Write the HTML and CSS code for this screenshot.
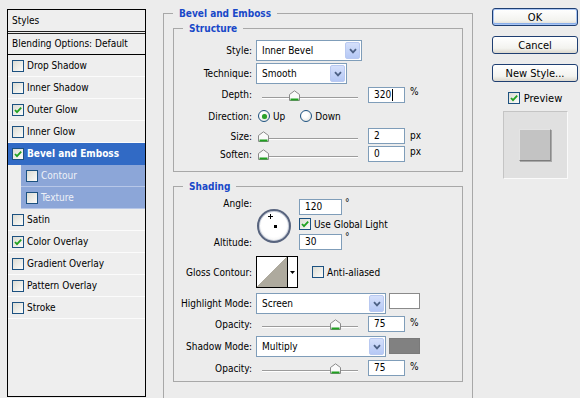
FILE: index.html
```html
<!DOCTYPE html>
<html>
<head>
<meta charset="utf-8">
<title>Layer Style</title>
<link rel="stylesheet" href="styles.css">
</head>
<body>
<div class="dialog">
  <div class="styles-panel">
    <div class="sp-head">Styles</div>
    <div class="sp-blend">Blending Options: Default</div>
    <ul class="sp-list">
      <li class="sp-item"><span class="cb"></span>Drop Shadow</li>
      <li class="sp-item"><span class="cb"></span>Inner Shadow</li>
      <li class="sp-item"><span class="cb"><svg viewBox="0 0 10 10"><path d="M2 5 L4 7.2 L8.2 2.6"/></svg></span>Outer Glow</li>
      <li class="sp-item"><span class="cb"></span>Inner Glow</li>
      <li class="sp-item selected"><span class="cb"><svg viewBox="0 0 10 10"><path d="M2 5 L4 7.2 L8.2 2.6"/></svg></span>Bevel and Emboss</li>
      <li class="sp-item sub"><span class="cb"></span>Contour</li>
      <li class="sp-item sub"><span class="cb"></span>Texture</li>
      <li class="sp-item"><span class="cb"></span>Satin</li>
      <li class="sp-item"><span class="cb"><svg viewBox="0 0 10 10"><path d="M2 5 L4 7.2 L8.2 2.6"/></svg></span>Color Overlay</li>
      <li class="sp-item"><span class="cb"></span>Gradient Overlay</li>
      <li class="sp-item"><span class="cb"></span>Pattern Overlay</li>
      <li class="sp-item"><span class="cb"></span>Stroke</li>
    </ul>
  </div>

  <fieldset class="group outer">
    <legend class="lg-outer">Bevel and Emboss</legend>

    <fieldset class="group inner structure">
      <legend class="lg-inner">Structure</legend>
      <div class="row r-style">
        <span class="lbl">Style:</span>
        <div class="select w-style"><span>Inner Bevel</span><span class="arrow"><svg viewBox="0 0 8 6"><path d="M1 1.2 L4 4.4 L7 1.2"/></svg></span></div>
      </div>
      <div class="row r-tech">
        <span class="lbl">Technique:</span>
        <div class="select w-tech"><span>Smooth</span><span class="arrow"><svg viewBox="0 0 8 6"><path d="M1 1.2 L4 4.4 L7 1.2"/></svg></span></div>
      </div>
      <div class="row r-depth">
        <span class="lbl">Depth:</span>
        <div class="slider"><span class="thumb" style="left:32%"><svg viewBox="0 0 11 11"><path class="tb" d="M0.5 10.5 V4.5 L5.5 0.8 L10.5 4.5 V10.5 Z"/><path class="tg" d="M1.5 9.5 H9.5"/></svg></span></div>
        <div class="num">320<span class="caret"></span></div>
        <span class="unit">%</span>
      </div>
      <div class="row r-dir">
        <span class="lbl">Direction:</span>
        <label class="opt"><span class="radio on"></span>Up</label>
        <label class="opt opt2"><span class="radio"></span>Down</label>
      </div>
      <div class="row r-size">
        <span class="lbl">Size:</span>
        <div class="slider"><span class="thumb" style="left:0%"><svg viewBox="0 0 11 11"><path class="tb" d="M0.5 10.5 V4.5 L5.5 0.8 L10.5 4.5 V10.5 Z"/><path class="tg" d="M1.5 9.5 H9.5"/></svg></span></div>
        <div class="num">2</div>
        <span class="unit">px</span>
      </div>
      <div class="row r-soften">
        <span class="lbl">Soften:</span>
        <div class="slider"><span class="thumb" style="left:0%"><svg viewBox="0 0 11 11"><path class="tb" d="M0.5 10.5 V4.5 L5.5 0.8 L10.5 4.5 V10.5 Z"/><path class="tg" d="M1.5 9.5 H9.5"/></svg></span></div>
        <div class="num">0</div>
        <span class="unit">px</span>
      </div>
    </fieldset>

    <fieldset class="group inner shading">
      <legend class="lg-inner">Shading</legend>
      <div class="angle-grid">
        <span class="lbl lbl-angle">Angle:</span>
        <div class="dial"><span class="cross"></span><span class="dot"></span></div>
        <div class="cell"><div class="num w-ang">120</div><span class="deg">°</span></div>
        <div class="cell"><span class="cb"><svg viewBox="0 0 10 10"><path d="M2 5 L4 7.2 L8.2 2.6"/></svg></span><span class="cbtext">Use Global Light</span></div>
        <span class="lbl lbl-alt">Altitude:</span>
        <div class="cell"><div class="num w-ang">30</div><span class="deg">°</span></div>
      </div>
      <div class="row r-gloss">
        <span class="lbl">Gloss Contour:</span>
        <div class="contour"><span class="curve"></span><span class="cdrop"><svg viewBox="0 0 5 3"><path d="M0 0 H5 L2.5 3 Z"/></svg></span></div>
        <span class="cb aa"></span><span class="cbtext">Anti-aliased</span>
      </div>
      <div class="row r-hmode">
        <span class="lbl">Highlight Mode:</span>
        <div class="select w-mode"><span>Screen</span><span class="arrow"><svg viewBox="0 0 8 6"><path d="M1 1.2 L4 4.4 L7 1.2"/></svg></span></div>
        <span class="swatch white"></span>
      </div>
      <div class="row r-op1">
        <span class="lbl">Opacity:</span>
        <div class="slider"><span class="thumb" style="left:75%"><svg viewBox="0 0 11 11"><path class="tb" d="M0.5 10.5 V4.5 L5.5 0.8 L10.5 4.5 V10.5 Z"/><path class="tg" d="M1.5 9.5 H9.5"/></svg></span></div>
        <div class="num">75</div>
        <span class="unit">%</span>
      </div>
      <div class="row r-smode">
        <span class="lbl">Shadow Mode:</span>
        <div class="select w-mode"><span>Multiply</span><span class="arrow"><svg viewBox="0 0 8 6"><path d="M1 1.2 L4 4.4 L7 1.2"/></svg></span></div>
        <span class="swatch grey"></span>
      </div>
      <div class="row r-op2">
        <span class="lbl">Opacity:</span>
        <div class="slider"><span class="thumb" style="left:75%"><svg viewBox="0 0 11 11"><path class="tb" d="M0.5 10.5 V4.5 L5.5 0.8 L10.5 4.5 V10.5 Z"/><path class="tg" d="M1.5 9.5 H9.5"/></svg></span></div>
        <div class="num">75</div>
        <span class="unit">%</span>
      </div>
    </fieldset>
  </fieldset>

  <div class="side">
    <button class="btn default">OK</button>
    <button class="btn">Cancel</button>
    <button class="btn">New Style...</button>
    <label class="preview-toggle"><span class="cb"><svg viewBox="0 0 10 10"><path d="M2 5 L4 7.2 L8.2 2.6"/></svg></span>Preview</label>
    <div class="preview-box"><div class="preview-square"></div></div>
  </div>
</div>
</body>
</html>
```
FILE: styles.css
```css
* { box-sizing: border-box; }
html, body { margin: 0; padding: 0; }
body {
  width: 580px;
  height: 398px;
  overflow: hidden;
  background: #ececec;
  color: #000;
  font-family: "DejaVu Sans Condensed", "DejaVu Sans", sans-serif;
  font-stretch: condensed;
  font-size: 10px;
}
.dialog {
  display: flex;
  align-items: flex-start;
  height: 398px;
  overflow: hidden;
}

/* ---------- left styles list ---------- */
.styles-panel {
  margin: 9px 0 0 7px;
  width: 139px;
  height: 388px;
  border: 1px solid #000;
  background: #eeeeee;
  display: flex;
  flex-direction: column;
  flex: none;
}
.sp-head {
  height: 24px;
  line-height: 21px;
  padding-left: 4px;
  border-bottom: 3px double #222;
}
.sp-blend {
  height: 21px;
  line-height: 20px;
  padding-left: 4px;
  border-bottom: 1px solid #000;
}
.sp-list {
  list-style: none;
  margin: 0;
  padding: 0;
}
.sp-item {
  height: 22px;
  display: flex;
  align-items: center;
  gap: 3px;
  padding-left: 4px;
  border-bottom: 1px solid #fbfbfb;
}
.sp-item.selected {
  background: #316ac5;
  color: #fff;
  font-weight: bold;
  border-bottom-color: #316ac5;
}
.sp-item.sub {
  margin-left: 13px;
  padding-left: 5px;
  background: #8ca6d8;
  color: #eef1f7;
  border-bottom-color: #b7c7e8;
}

/* checkbox */
.cb {
  width: 12px;
  height: 12px;
  flex: none;
  border: 1px solid #1c5180;
  background: linear-gradient(135deg, #dcdcd4, #fbfbf9);
  display: inline-flex;
  align-items: center;
  justify-content: center;
}
.cb svg { width: 10px; height: 10px; }
.cb svg path {
  fill: none;
  stroke: #21a121;
  stroke-width: 1.8;
}
.cbtext { margin-left: 3px; }

/* ---------- group boxes ---------- */
.group {
  margin: 0;
  border: 1px solid #a8a8a8;
  min-width: 0;
}
.group > legend {
  padding: 0 6px;
  font-weight: bold;
  color: #1848c8;
  line-height: 13px;
  height: 13px;
}
.outer {
  margin: 7px 0 0 17px;
  width: 310px;
  height: 395px;
  padding: 2px 9px 0 9px;
  flex: none;
}
.lg-outer { margin-left: 0; }
.lg-inner { margin-left: 9px; }
.inner { width: 290px; padding: 0; }
.structure { padding: 4px 0 7px 0; }
.shading { margin-top: 8px; padding: 6px 0 5px 0; }

/* ---------- rows ---------- */
.row {
  display: flex;
  align-items: center;
}
.lbl {
  width: 78px;
  flex: none;
  text-align: right;
  margin-right: 4px;
}
.r-style { height: 23px; }
.r-tech { height: 23px; }
.r-depth { height: 19px; }
.r-dir { height: 24px; }
.r-size { height: 16px; }
.r-soften { height: 20px; }

.select {
  height: 21px;
  border: 1px solid #7f9db9;
  background: #fff;
  padding-left: 5px;
  display: flex;
  align-items: center;
  justify-content: space-between;
  flex: none;
}
.w-style { width: 106px; }
.w-tech { width: 91px; }
.w-mode { width: 130px; }
.select .arrow {
  width: 15px;
  height: 17px;
  margin-right: 1px;
  border: 1px solid #b9c9f1;
  border-radius: 2px;
  background: linear-gradient(#d5e0fb, #b5c8f5);
  display: flex;
  align-items: center;
  justify-content: center;
}
.select .arrow svg { width: 8px; height: 6px; }
.select .arrow path { fill: none; stroke: #4d6185; stroke-width: 1.8; }

.slider {
  position: relative;
  width: 96px;
  height: 16px;
  margin-left: 6px;
  flex: none;
}
.slider::before {
  content: "";
  position: absolute;
  left: 0;
  right: 0;
  top: 10px;
  border-top: 1px solid #9c9c9c;
  border-bottom: 1px solid #fff;
}
.thumb {
  position: absolute;
  top: 3px;
  width: 11px;
  height: 11px;
  margin-left: -4px;
}
.thumb svg { width: 11px; height: 11px; display: block; }
.thumb .tb { fill: #fafafa; stroke: #8a8a8a; stroke-width: 1; }
.thumb .tg { stroke: #21a121; stroke-width: 2; }

.num {
  width: 37px;
  height: 16px;
  margin-left: 10px;
  border: 1px solid #7f9db9;
  background: #fff;
  padding-left: 5px;
  line-height: 14px;
  display: flex;
  align-items: center;
  flex: none;
}
.caret {
  width: 1px;
  height: 12px;
  background: #000;
  margin-left: 1px;
}
.unit { margin-left: 5px; align-self: flex-start; margin-top: 1px; }
.r-size .unit, .r-soften .unit { margin-top: 2px; }

.opt {
  display: flex;
  align-items: center;
  gap: 3px;
  margin-left: 2px;
}
.opt2 { margin-left: 15px; }
.radio {
  width: 12px;
  height: 12px;
  border-radius: 50%;
  border: 1px solid #1c5180;
  background: radial-gradient(circle at 40% 40%, #fff 30%, #dcdcd6);
  display: inline-flex;
  align-items: center;
  justify-content: center;
}
.radio.on::after {
  content: "";
  width: 5px;
  height: 5px;
  border-radius: 50%;
  background: #2aa12a;
  box-shadow: 0 0 1px #7fd07f;
}

/* ---------- shading ---------- */
.angle-grid {
  display: grid;
  grid-template-columns: 78px 39px auto;
  grid-template-rows: 16px 18px 18px;
  column-gap: 4px;
}
.lbl-angle { grid-column: 1; grid-row: 1; align-self: start; line-height: 9px; margin-right: 0; }
.lbl-alt { grid-column: 1; grid-row: 3; align-self: center; margin-right: 0; }
.dial {
  grid-column: 2;
  grid-row: 1 / 4;
  align-self: center;
  margin-left: 1px;
  margin-top: 2px;
  width: 34px;
  height: 34px;
  border-radius: 50%;
  border: 2px solid #58647e;
  background: radial-gradient(circle at 50% 45%, #ffffff 55%, #e2e2e2);
  box-shadow: inset 0 0 0 1px #c9cfdb;
  position: relative;
}
.cross {
  position: absolute;
  left: 9px;
  top: 3px;
  width: 5px;
  height: 5px;
  background:
    linear-gradient(#000, #000) center / 1px 5px no-repeat,
    linear-gradient(#000, #000) center / 5px 1px no-repeat;
}
.dot {
  position: absolute;
  left: 15px;
  top: 14px;
  width: 3px;
  height: 3px;
  background: #000;
}
.cell { display: flex; align-items: center; grid-column: 3; }
.angle-grid .num { margin-left: 0; }
.w-ang { width: 43px !important; }
.deg { margin-left: 3px; align-self: flex-start; line-height: 8px; }

.r-gloss { margin-top: 5px; height: 32px; }
.contour {
  width: 42px;
  height: 32px;
  border: 1px solid #000;
  display: flex;
  flex: none;
}
.curve {
  width: 31px;
  height: 100%;
  background: linear-gradient(to bottom right, #ffffff 50%, #aeaa9e 50%);
  border-right: 1px solid #000;
}
.cdrop {
  flex: 1;
  background: #fff;
  display: flex;
  align-items: center;
  justify-content: center;
}
.cdrop svg { width: 5px; height: 3px; }
.cdrop path { fill: #000; }
.cb.aa { margin-left: 14px; }

.r-hmode { margin-top: 5px; height: 21px; align-items: flex-start; }
.r-op1 { margin-top: 2px; height: 16px; }
.r-smode { margin-top: 4px; height: 21px; align-items: flex-start; }
.r-op2 { margin-top: 3px; height: 16px; }
.r-hmode .lbl, .r-smode .lbl { align-self: center; }
.swatch {
  width: 31px;
  height: 16px;
  margin-left: 3px;
  flex: none;
}
.swatch.white { background: #fff; border: 1px solid #8a8a8a; }
.swatch.grey { background: #818181; border: 1px solid #7a7a7a; margin-top: 2px; }

/* ---------- right column ---------- */
.side {
  margin-left: 19px;
  margin-top: 8px;
  width: 86px;
  display: flex;
  flex-direction: column;
  align-items: center;
  flex: none;
}
.btn {
  width: 86px;
  height: 18px;
  padding: 0;
  border: 1px solid #1f3f72;
  border-radius: 3px;
  background: linear-gradient(#ffffff, #f3f3ef 70%, #dcd8ce);
  font-family: "DejaVu Sans Condensed", "DejaVu Sans", sans-serif;
  font-stretch: condensed;
  font-size: 11px;
  color: #000;
  display: flex;
  align-items: center;
  justify-content: center;
  margin-bottom: 10px;
}
.btn.default {
  box-shadow: inset 0 0 0 1px #a9c5f4, inset 0 -1px 0 1px #89aee9;
}
.preview-toggle {
  display: flex;
  align-items: center;
  gap: 4px;
  height: 14px;
  margin-top: -1px;
  font-size: 11px;
}
.preview-box {
  margin-top: 6px;
  width: 65px;
  height: 68px;
  background: #e0e0e0;
  border: 1px solid;
  border-color: #c4c4c4 #fafafa #fafafa #c4c4c4;
  display: flex;
  align-items: center;
  justify-content: center;
}
.preview-square {
  width: 32px;
  height: 32px;
  background: #c3c3c3;
  border: 1px solid;
  border-color: #e4e4e4 #8a8a8a #7c7c7c #e4e4e4;
  box-shadow: 1px 1px 0 #a8a8a8;
}
```
